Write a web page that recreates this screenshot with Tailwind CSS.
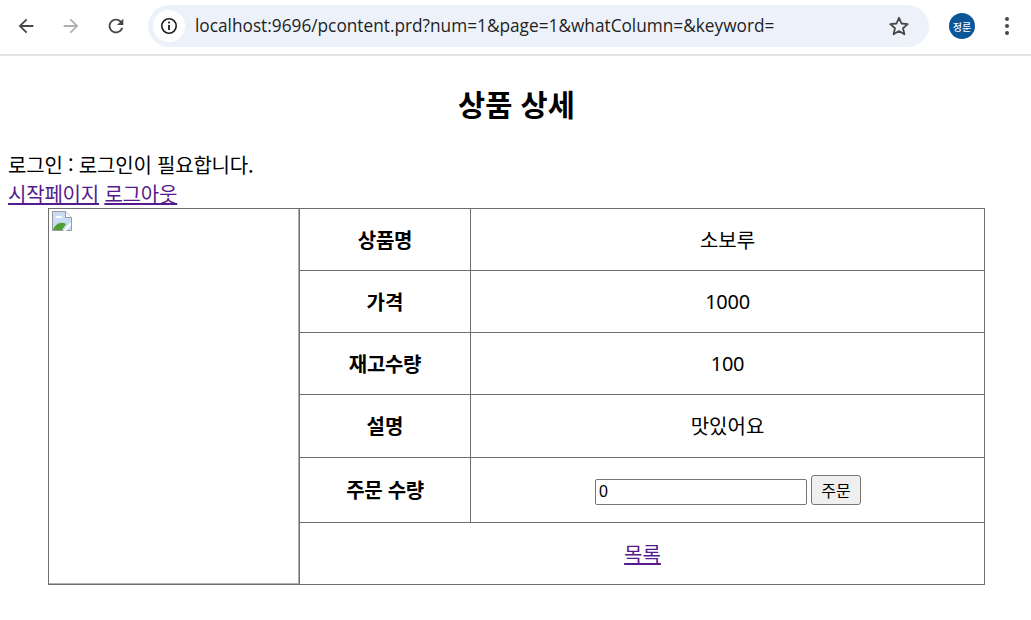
<!DOCTYPE html>
<html lang="ko">
<head>
    <meta charset="UTF-8">
    <title>상품 상세</title>
    <script src="https://cdn.jsdelivr.net/npm/@tailwindcss/browser@4"></script>
</head>
<body class="bg-white text-black font-['Noto_Sans_CJK_KR','Noto_Sans',sans-serif] overflow-hidden">

    <!-- Browser toolbar -->
    <div class="h-[56px] pb-[2px] flex items-center bg-white border-b-2 border-[#e3e3e3]">
        <div class="w-[148px] shrink-0 flex items-center pl-[15px] gap-[23px]">
            <svg class="w-[22px] h-[22px]" viewBox="0 0 24 24" fill="#474747"><path d="M20 11H7.830l5.590-5.590L12 4l-8 8 8 8 1.410-1.410L7.830 13H20v-2z"/></svg>
            <svg class="w-[22px] h-[22px]" viewBox="0 0 24 24" fill="#b0b0b0"><path d="M12 4l-1.410 1.410L16.170 11H4v2h12.170l-5.580 5.590L12 20l8-8z"/></svg>
            <svg class="w-[22px] h-[22px]" viewBox="0 0 24 24" fill="#474747"><path d="M17.650 6.350C16.200 4.900 14.210 4 12 4c-4.420 0-7.990 3.580-7.990 8s3.570 8 7.990 8c3.730 0 6.840-2.550 7.730-6h-2.080c-.82 2.330-3.040 4-5.650 4-3.310 0-6-2.690-6-6s2.690-6 6-6c1.660 0 3.140.69 4.220 1.780L13 11h7V4l-2.350 2.350z"/></svg>
        </div>
        <div class="w-[781px] h-[42px] shrink-0 rounded-full bg-[#edf2fa] flex items-center pl-[5px] pr-[19px]">
            <div class="w-[32px] h-[32px] rounded-full bg-white flex items-center justify-center">
                <svg class="w-[18px] h-[18px]" viewBox="0 0 18 18" fill="none"><circle cx="9" cy="9" r="7.200" stroke="#1f1f1f" stroke-width="1.600"/><path d="M9 8v5" stroke="#1f1f1f" stroke-width="1.800"/><circle cx="9" cy="5.500" r="1.100" fill="#1f1f1f"/></svg>
            </div>
            <span class="ml-[10px] text-[17.250px] text-[#1f1f1f] font-['Open_Sans',sans-serif]">localhost:9696/pcontent.prd?num=1&amp;page=1&amp;whatColumn=&amp;keyword=</span>
            <svg class="ml-auto w-[22px] h-[22px]" viewBox="0 0 22 22" fill="none" stroke="#474747" stroke-width="1.800" stroke-linejoin="round"><path d="M11 2.800l2.500 5.700 6.200.6-4.700 4.100 1.400 6.100L11 16.100l-5.400 3.200L7 13.200 2.300 9.100l6.200-.6z"/></svg>
        </div>
        <div class="ml-[20px] w-[26px] h-[26px] rounded-full bg-[#0b5599] text-white text-[10px] font-medium flex items-center justify-center">정룬</div>
        <div class="ml-[30px] flex flex-col gap-[3px]">
            <span class="w-[4px] h-[4px] rounded-full bg-[#474747]"></span>
            <span class="w-[4px] h-[4px] rounded-full bg-[#474747]"></span>
            <span class="w-[4px] h-[4px] rounded-full bg-[#474747]"></span>
        </div>
    </div>

    <!-- Page content -->
    <h2 class="mt-[27px] pl-[2px] text-center text-[29.500px] leading-[40px] font-bold">상품 상세</h2>
    <div class="mt-[27px] pl-2 text-[20px] leading-[30px] tracking-[-0.2px]">로그인 : 로그인이 필요합니다.</div>
    <div class="pl-2 text-[20px] leading-[28px] tracking-[-0.2px] text-[#551a8b]"><a href="#" class="underline">시작페이지</a> <a href="#" class="underline">로그아웃</a></div>

    <table class="ml-[48px] w-[936px] table-fixed border-collapse border border-[#6e6e6e] text-[20px] text-center">
        <colgroup>
            <col class="w-[251px]">
            <col class="w-[171px]">
            <col class="w-[514px]">
        </colgroup>
        <tbody>
            <tr class="h-[62px]">
                <td rowspan="6" class="border border-[#6e6e6e] p-0 align-top text-left shadow-[inset_-1px_-1px_0_#b0b0b0]">
                    <!-- broken image placeholder -->
                    <svg class="w-[20px] h-[20px] mt-[2px] ml-[3px]" viewBox="0 0 20 20">
                        <path d="M.5.5h13l6 6v13H.5z" fill="#c9dcf6" stroke="#9a9a9a"/>
                        <path d="M13.500.5v6h6" fill="#fff" stroke="#9a9a9a"/>
                        <path d="M3 7c1-3 6-3 8 0z" fill="#fff"/>
                        <path d="M1 19c2-6 8-9 13-6l-4 6z" fill="#4f9e33"/>
                        <path d="M11 20l8-9v3l-5 6z" fill="#fff"/>
                    </svg>
                </td>
                <th class="border border-[#6e6e6e] font-bold tracking-[-0.3px]">상품명</th>
                <td class="border border-[#6e6e6e]">소보루</td>
            </tr>
            <tr class="h-[62px]">
                <th class="border border-[#6e6e6e] font-bold">가격</th>
                <td class="border border-[#6e6e6e] tracking-[-0.3px] font-['Noto_Sans',sans-serif]">1000</td>
            </tr>
            <tr class="h-[62px]">
                <th class="border border-[#6e6e6e] font-bold tracking-[-0.3px]">재고수량</th>
                <td class="border border-[#6e6e6e] tracking-[-0.3px] font-['Noto_Sans',sans-serif]">100</td>
            </tr>
            <tr class="h-[63px]">
                <th class="border border-[#6e6e6e] font-bold">설명</th>
                <td class="border border-[#6e6e6e]">맛있어요</td>
            </tr>
            <tr class="h-[65px]">
                <th class="border border-[#6e6e6e] font-bold tracking-[-0.3px]">주문 수량</th>
                <td class="border border-[#6e6e6e]">
                    <div class="flex items-end justify-center gap-[4px] pl-[1px]">
                        <input type="text" value="0" class="w-[212px] h-[26px] px-[3px] border border-[#767676] rounded-[2px] text-[16px] leading-none bg-white font-['Liberation_Sans',sans-serif]">
                        <button class="w-[50px] h-[30px] bg-[#efefef] border border-[#767676] rounded-[3px] text-[16px] leading-none">주문</button>
                    </div>
                </td>
            </tr>
            <tr class="h-[62px]">
                <td colspan="2" class="border border-[#6e6e6e] pl-[1px]"><a href="#" class="underline text-[#551a8b]">목록</a></td>
            </tr>
        </tbody>
    </table>
</body>
</html>
